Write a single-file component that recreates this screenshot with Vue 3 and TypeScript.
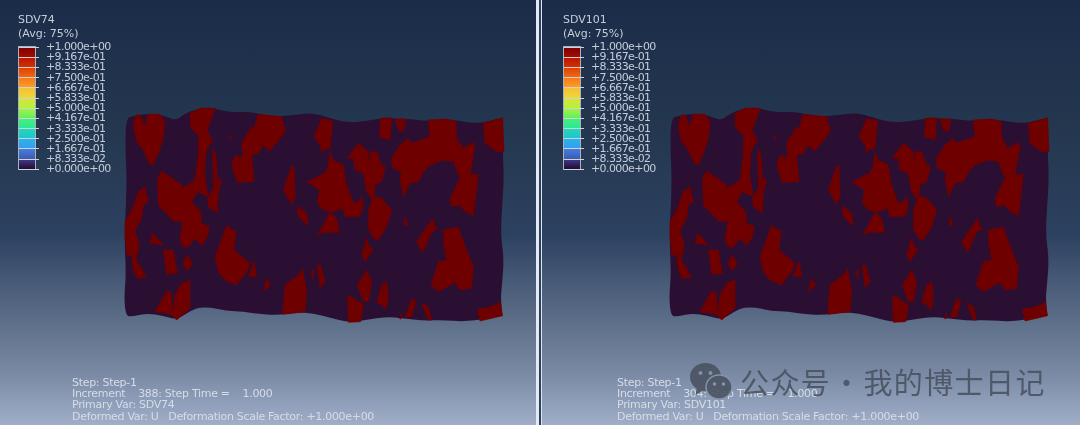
<template>
  <div class="stage">
    <template v-for="(view, i) in views" :key="view.name">
      <div v-if="i === 1" class="divider"></div>
      <section class="panel" :class="{ second: i === 1 }">
        <div class="legend">
          <div class="legend-title">{{ view.name }}</div>
          <div class="legend-title">(Avg: 75%)</div>
          <div class="scale">
            <div class="bar">
              <div v-for="band in bands" :key="band" class="band" :style="{ background: band }"></div>
            </div>
            <div class="ticks">
              <div v-for="label in labels" :key="label" class="tick-row">
                <span class="tick"></span>
                <span class="tick-label">{{ label }}</span>
              </div>
            </div>
          </div>
        </div>

        <svg class="mesh" viewBox="0 0 1230 720" width="410" height="240">
          <path :d="outlinePath" fill="#2a0f33" />
          <polygon v-for="(shape, n) in patches" :key="n" :points="shape" class="patch" />
        </svg>

        <div class="info">
          <div>Step: Step-1</div>
          <div>Increment&nbsp;&nbsp;&nbsp;&nbsp;{{ view.increment }}: Step Time =&nbsp;&nbsp;&nbsp;&nbsp;1.000</div>
          <div>Primary Var: {{ view.name }}</div>
          <div>Deformed Var: U&nbsp;&nbsp;&nbsp;Deformation Scale Factor: +1.000e+00</div>
        </div>
      </section>
    </template>

    <div class="watermark">
      <svg class="wechat" viewBox="0 0 42 38" width="42" height="38">
        <ellipse cx="15.5" cy="15" rx="15.5" ry="14" fill="#4a5361" />
        <path d="M7 25 L5.5 33 L14 28 Z" fill="#4a5361" />
        <circle cx="10.5" cy="11" r="2" fill="#8291a8" />
        <circle cx="20.5" cy="11" r="2" fill="#8291a8" />
        <ellipse cx="29" cy="25" rx="13" ry="12" stroke="#8593ab" stroke-width="1.5" fill="#4a5361" />
        <circle cx="24.5" cy="22" r="1.7" fill="#8a98af" />
        <circle cx="33.5" cy="22" r="1.7" fill="#8a98af" />
      </svg>
      <span class="wm-text">公众号 · 我的博士日记</span>
    </div>
  </div>
</template>

<script setup lang="ts">
const views = [
  { name: 'SDV74', increment: 388 },
  { name: 'SDV101', increment: 304 },
]

const labels = [
  '+1.000e+00', '+9.167e-01', '+8.333e-01', '+7.500e-01', '+6.667e-01', '+5.833e-01', '+5.000e-01',
  '+4.167e-01', '+3.333e-01', '+2.500e-01', '+1.667e-01', '+8.333e-02', '+0.000e+00',
]

const bands = [
  'linear-gradient(#7a0000, #a80c00)',
  'linear-gradient(#b81400, #d43000)',
  'linear-gradient(#dc4000, #f56a10)',
  'linear-gradient(#f77a14, #fca028)',
  'linear-gradient(#f6c030, #ecd83c)',
  'linear-gradient(#d8e438, #b8f03a)',
  'linear-gradient(#a8f43c, #60f060)',
  'linear-gradient(#4cf070, #28e89c)',
  'linear-gradient(#20dcae, #20c0d8)',
  'linear-gradient(#28b4e8, #389cf0)',
  'linear-gradient(#4080e0, #4058b0)',
  'linear-gradient(#403c90, #240c30)',
]

// traced from the contour plot, in 3x crop coordinates
const outline: [number, number][] = [
  [48, 68], [75, 62], [110, 56], [150, 58], [175, 68], [200, 76], [225, 55], [260, 42], [300, 37], [330, 45],
  [370, 52], [420, 50], [450, 58], [500, 65], [550, 60], [600, 54], [630, 60], [670, 72], [710, 82], [760, 80],
  [810, 70], [860, 70], [900, 72], [950, 78], [1010, 72], [1050, 78], [1100, 85], [1140, 78], [1178, 68],
  [1178, 170], [1182, 250], [1176, 340], [1172, 420], [1182, 490], [1176, 570], [1172, 610], [1178, 662],
  [1130, 672], [1060, 680], [1000, 675], [940, 677], [880, 670], [830, 665], [770, 675], [715, 682], [660, 668],
  [610, 655], [560, 652], [510, 660], [450, 658], [400, 650], [350, 648], [290, 635], [250, 642], [200, 675],
  [160, 662], [110, 655], [65, 665], [48, 662], [42, 610], [48, 540], [45, 470], [44, 400], [48, 330], [50, 240],
  [46, 160],
]

// quadratic midpoints so the mesh edge waves instead of kinking
const outlinePath = outline
  .map((p, i) => {
    const next = outline[(i + 1) % outline.length]
    const mx = (p[0] + next[0]) / 2
    const my = (p[1] + next[1]) / 2
    return `${i === 0 ? `M${mx} ${my}` : `Q${p[0]} ${p[1]} ${mx} ${my}`}`
  })
  .join(' ') + ` Q${outline[0][0]} ${outline[0][1]} ${(outline[0][0] + outline[1][0]) / 2} ${(outline[0][1] + outline[1][1]) / 2} Z`

const patches = [
  '70,95 78,60 92,60 103,95 115,57 150,58 165,80 160,130 145,175 130,210 118,205 100,165 80,140',
  '240,55 270,40 316,40 292,105 308,140 298,150 288,170 284,240 295,305 262,290 245,320 272,350 275,385 298,395 292,425 275,452 255,430 232,460 215,450 210,435 218,380 190,378 145,330 143,250 155,228 215,270 215,282 255,255 265,180 265,120 242,100',
  '308,160 318,180 322,250 315,285 326,250 335,255 325,295 322,355 295,335 292,310 310,280',
  '395,145 425,95 430,105 445,58 515,65 526,110 480,168 458,150 445,175 425,180 432,260 382,262 365,210 375,180 398,190',
  '357,125 362,125 361,135 358,135',
  '612,125 635,70 668,78 660,160 640,165 635,175 630,150',
  '660,170 670,195 700,210 708,265 730,325 745,320 755,305 760,335 748,365 705,365 698,340 670,350 640,345 622,325 628,285 590,260 605,255 630,240 645,235 655,210',
  '520,285 545,212 552,215 556,305 545,328',
  '563,332 590,355 595,392 575,375 563,360',
  '660,350 680,370 688,412 640,412 622,420 640,390',
  '712,190 745,145 775,170 778,210 782,170 800,170 815,210 826,215 815,260 795,270 790,318 770,290 760,235 735,225 730,190',
  '812,70 845,68 840,135 808,125',
  '855,72 888,72 880,110 865,105',
  '845,190 870,150 895,130 905,145 960,125 955,75 1010,72 1038,80 1040,130 1060,160 1090,142 1095,155 1080,238 1105,238 1098,300 1090,362 1060,345 1050,330 1025,335 1020,310 1050,250 1030,200 1000,195 960,210 940,230 925,260 900,265 880,305 870,250 875,235 845,215',
  '1120,85 1178,68 1182,170 1160,170 1125,145',
  '775,350 790,302 815,310 845,345 830,395 805,435 790,430 775,400',
  '882,365 890,375 892,392 884,392',
  '920,440 968,370 975,395 985,400 965,410 938,472 925,450',
  '1000,405 1045,397 1060,440 1090,515 1085,580 1050,585 1035,562 985,590 963,570 985,500 1010,495 1000,440',
  '755,480 770,428 778,455 790,462 765,500',
  '742,570 770,525 785,560 775,620 760,620',
  '800,625 815,570 830,560 835,600 828,645 810,625',
  '712,605 725,605 760,630 752,680 715,682',
  '518,655 525,570 565,540 578,522 590,590 585,650 520,658',
  '603,530 612,522 608,555',
  '622,510 632,510 645,560 630,578',
  '460,590 470,550 482,570',
  '315,485 350,392 378,410 372,465 420,505 410,530 378,570 345,555 325,530',
  '415,545 432,498 440,545',
  '120,445 128,415 160,450',
  '160,465 190,465 202,535 170,538',
  '218,505 232,480 247,505 232,528',
  '45,380 68,340 85,290 105,275 115,320 100,330 95,370 75,405 88,450 78,495 92,515 108,548 82,550 70,525 65,480 50,480 45,420',
  '135,650 170,588 182,590 190,660 170,655',
  '190,650 195,600 215,565 240,555 240,640 200,675 190,665',
  '1102,643 1145,635 1170,622 1178,662 1110,678',
  '885,668 905,610 918,620 905,665',
  '935,625 955,635 965,675 955,675',
  '868,670 875,655 873,672',
]
</script>

<style>
html, body {
  margin: 0;
  background: #1c2d4a;
}
</style>

<style scoped>
.stage {
  position: relative;
  width: 1080px;
  height: 425px;
  display: flex;
  overflow: hidden;
  font-family: "DejaVu Sans", sans-serif;
  font-size: 11px;
}

.panel {
  position: relative;
  flex: 0 0 536px;
  height: 425px;
  display: flex;
  flex-direction: column;
  padding: 13px 0 0 18px;
  box-sizing: border-box;
  background: linear-gradient(#1b2c49 0%, #24374f 30%, #2c4160 55%, #5c6d88 75%, #7a8aa5 88%, #a0aec8 100%);
  color: #c6cdd8;
}
.panel.second {
  flex: 0 0 538px;
}

.divider {
  flex: 0 0 6px;
  background: linear-gradient(90deg, #e4eaf2 0 3px, #2c4160 3px 5px, #dfe6ef 5px 6px);
}

.legend-title {
  line-height: 13.5px;
  height: 13.5px;
  filter: blur(0.3px);
}

.scale {
  display: flex;
  margin-top: 6px;
}
.bar {
  width: 16px;
  height: 122px;
  border: 1px solid #a9b1bf;
  display: flex;
  flex-direction: column;
}
.band {
  flex: 1;
}

.ticks {
  margin-left: -17px;
  margin-top: -4px;
}
.tick-row {
  display: flex;
  align-items: center;
  height: 10.2px;
  line-height: 10.2px;
}
.tick {
  width: 20px;
  height: 1px;
  background: #cdd3dc;
}
.tick-label {
  margin-left: 7px;
  letter-spacing: -0.6px;
  filter: blur(0.3px);
}

.mesh {
  position: absolute;
  left: 110px;
  top: 95px;
}
.second .mesh {
  left: 113px;
}
.patch {
  fill: #6e0000;
  stroke: #6e0000;
  stroke-width: 2;
  stroke-linejoin: round;
}

.info {
  margin-top: auto;
  padding: 0 0 3px 54px;
  color: #d6dce7;
  line-height: 11.3px;
  letter-spacing: -0.3px;
  filter: blur(0.3px);
}
.second .info {
  padding-left: 57px;
}
.second .legend {
  margin-left: 3px;
}

.watermark {
  position: absolute;
  left: 690px;
  top: 362px;
  display: flex;
  align-items: center;
  gap: 8px;
  color: #4a5361;
  opacity: 0.9;
  filter: blur(0.4px);
}
.wm-text {
  font-family: "Noto Sans CJK SC", sans-serif;
  font-size: 29px;
  line-height: 38px;
  letter-spacing: 1.4px;
  word-spacing: -7px;
}
</style>
